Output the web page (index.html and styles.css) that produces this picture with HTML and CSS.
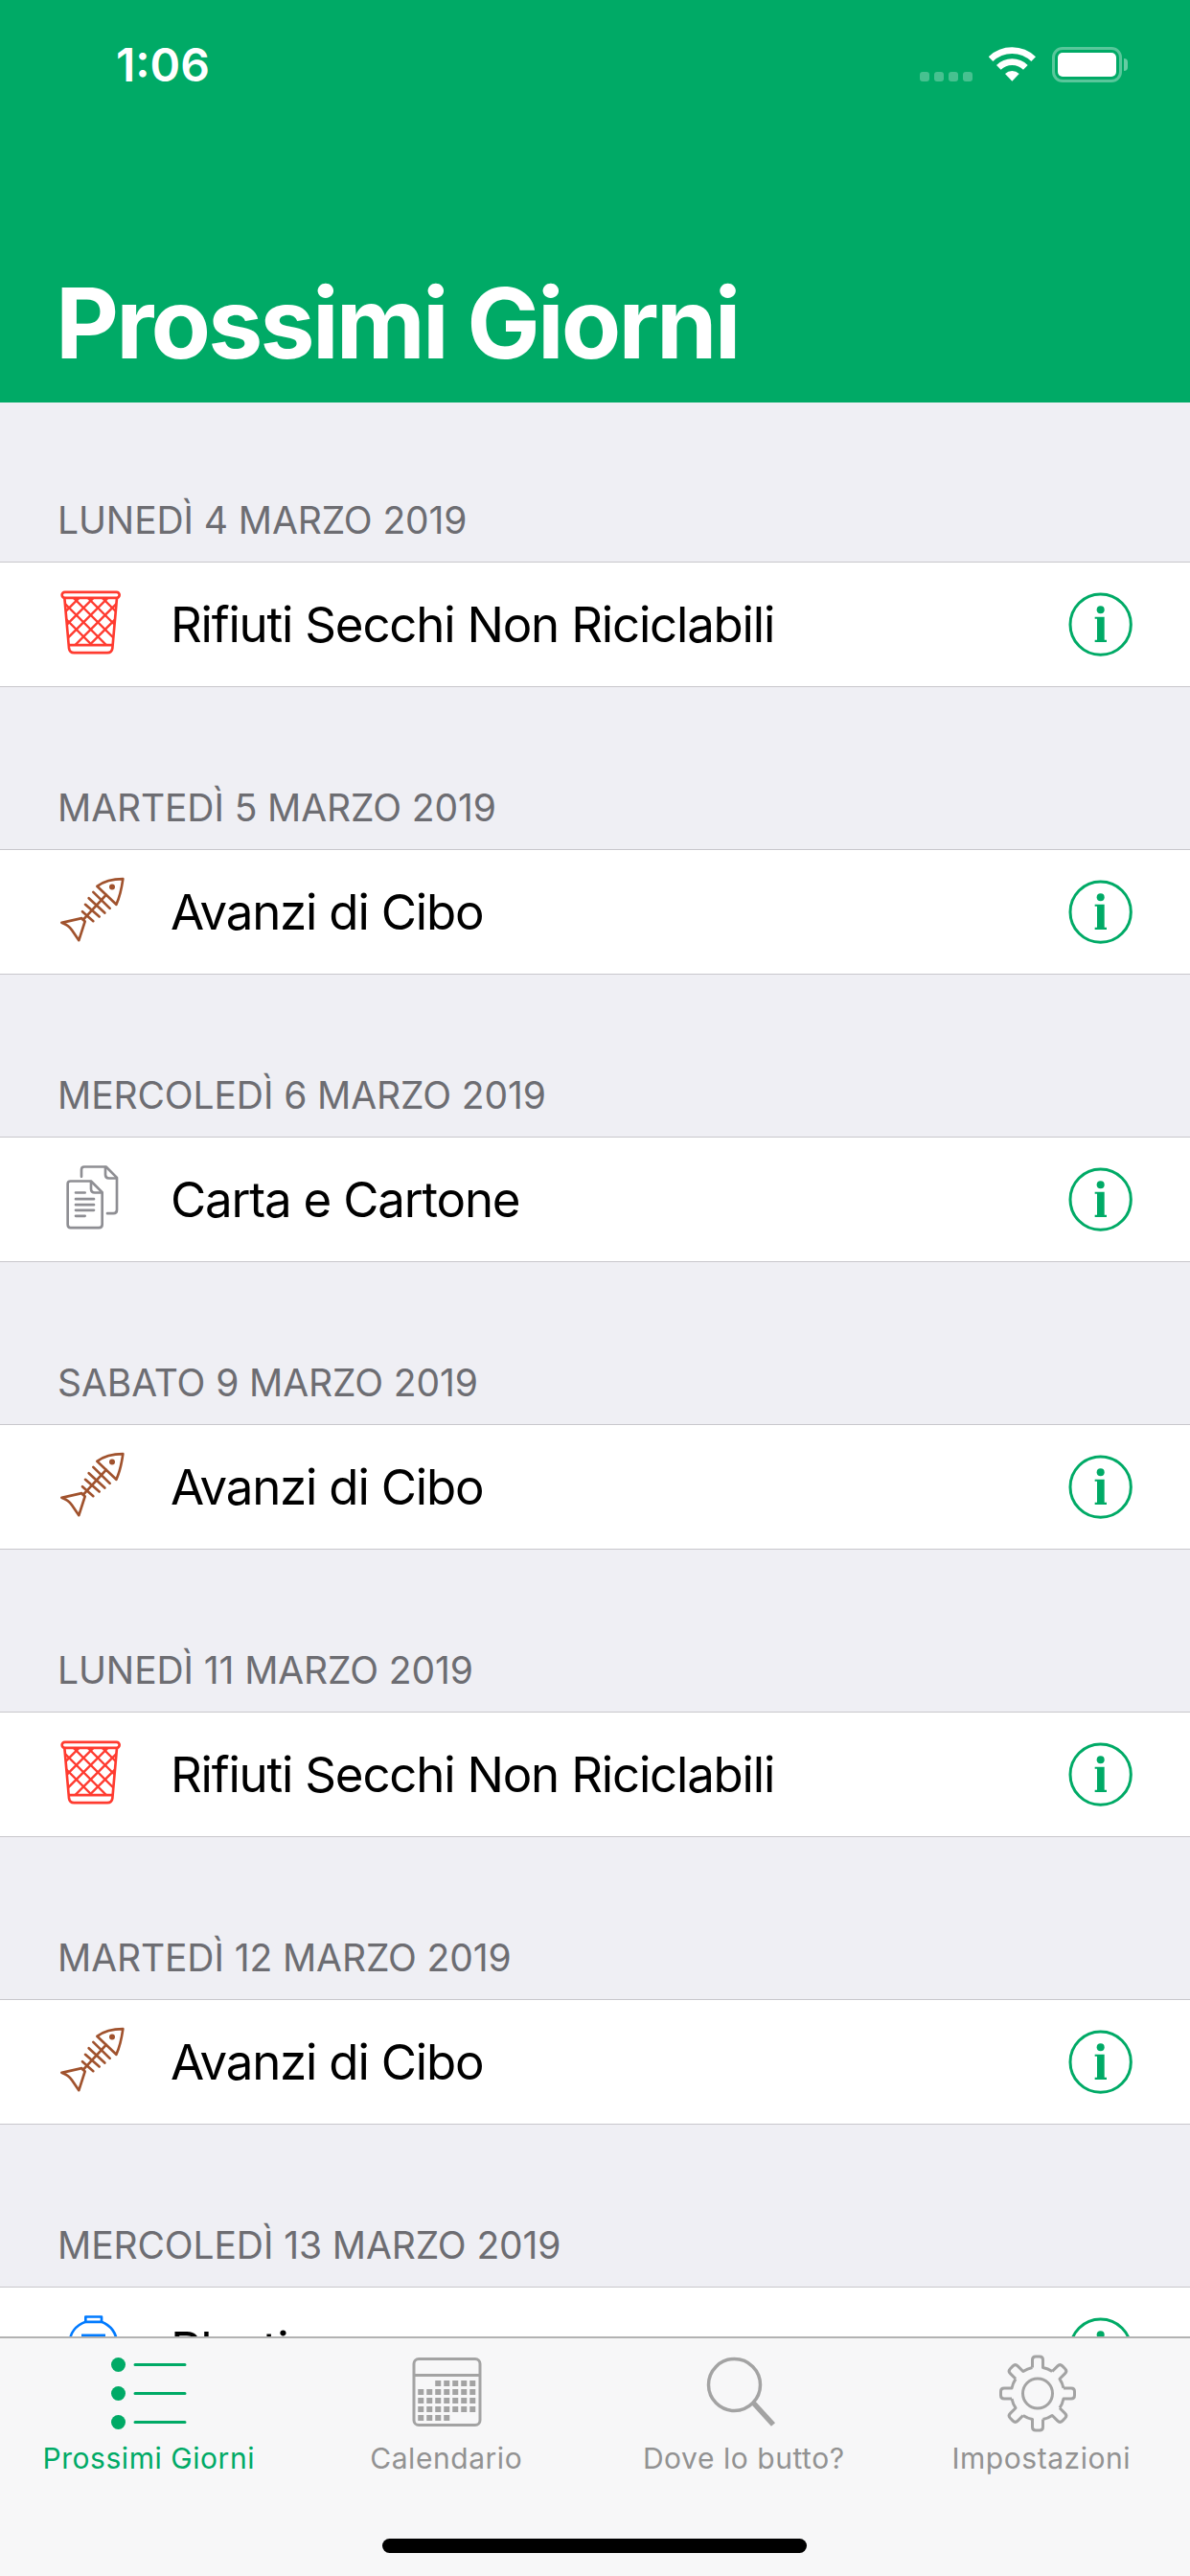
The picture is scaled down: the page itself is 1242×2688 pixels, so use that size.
FILE: index.html
```html
<!DOCTYPE html>
<html lang="it">
<head>
<meta charset="utf-8">
<title>Prossimi Giorni</title>
<link rel="stylesheet" href="styles.css">
</head>
<body>
<svg class="defs" width="0" height="0" aria-hidden="true">
  <defs>
    <clipPath id="trash-clip"><path d="M84 100H244L232 250H96Z"/></clipPath>
    <symbol id="trash" viewBox="30 49.5 270 270">
      <g fill="none" stroke="#ff3b30" stroke-width="8" stroke-linejoin="round">
        <rect x="74" y="82" width="180" height="18" rx="9"/>
        <path d="M82 100L96 258Q98 272 112 272H216Q230 272 232 258L246 100"/>
        <path d="M94 248H234"/>
        <g clip-path="url(#trash-clip)" stroke-width="7">
          <path d="M50 130L180 260M50 85L225 260M90 80L265 255M135 80L265 210M180 80L265 165M225 80L265 120"/>
          <path d="M278 130L148 260M278 85L103 260M238 80L63 255M193 80L63 210M148 80L63 165M103 80L63 120"/>
        </g>
      </g>
    </symbol>
    <symbol id="fish" viewBox="30 49.5 270 270">
      <g fill="none" stroke="#a0522d" stroke-width="8" stroke-linecap="round" stroke-linejoin="round">
        <path d="M265 80Q258 130 244 160L184 103Q215 80 265 80Z"/>
        <path d="M212 130L140 208"/>
        <path d="M172 121L224 172M158 140L208 186M147 160L191 198M138 182L172 212"/>
        <path d="M136 203L73 217Q95 225 105 240L127 272L146 213Z"/>
      </g>
      <circle cx="231" cy="105" r="9" fill="#a0522d"/>
    </symbol>
    <symbol id="paper" viewBox="30 49.5 270 270">
      <g fill="none" stroke="#8e8e93" stroke-width="8" stroke-linecap="round" stroke-linejoin="round">
        <path d="M135 112V90Q135 81 144 81H212L246 115V216Q246 227 235 227H216"/>
        <path d="M210 83V106Q210 117 221 117H244"/>
        <path d="M92 134Q92 126 101 126H165L200 161V262Q200 272 190 272H101Q92 272 92 262Z"/>
        <path d="M165 128V150Q165 162 177 162H198"/>
        <path d="M117 162H146M117 182H174M117 200H174M117 217H174M117 235H146"/>
      </g>
    </symbol>
    <symbol id="bottle" viewBox="30 49.5 270 270">
      <g fill="none" stroke="#007aff" stroke-width="8" stroke-linejoin="round">
        <path d="M148 81H198V97H148Z"/>
        <path d="M148 97C118 108 98 132 98 165V272Q98 290 116 290H228Q246 290 246 272V165C246 132 226 108 198 97"/>
        <path d="M135 140H210" stroke-width="10"/>
      </g>
    </symbol>
    <symbol id="info" viewBox="72 51 210 210">
      <circle cx="176" cy="155" r="95" fill="none" stroke="#00aa66" stroke-width="9"/>
      <circle cx="176" cy="109" r="12" fill="#00aa66"/>
      <path d="M158 131H188V203H195V210H158V203H165V137H158Z" fill="#00aa66"/>
    </symbol>
  </defs>
</svg>

<header class="nav">
  <div class="status">
    <span class="time">1:06</span>
    <div class="status-icons">
      <div class="signal"><i></i><i></i><i></i><i></i></div>
      <svg class="wifi" viewBox="277 58 147 108" width="49" height="36">
        <g fill="none" stroke="#fff" stroke-width="20">
          <path d="M283 96A96 96 0 0 1 417 96"/>
          <path d="M308 122A60 60 0 0 1 392 122"/>
        </g>
        <path d="M350 165L328 142A32 32 0 0 1 372 142Z" fill="#fff"/>
      </svg>
      <div class="battery"><div class="battery-level"></div></div>
      <div class="battery-nub"></div>
    </div>
  </div>
  <h1 class="title">Prossimi Giorni</h1>
</header>

<main class="list">
  <section class="section">
    <h2 class="date">LUNEDÌ 4 MARZO 2019</h2>
    <div class="row">
      <svg class="row-icon"><use href="#trash"/></svg>
      <span class="row-text">Rifiuti Secchi Non Riciclabili</span>
      <svg class="row-info"><use href="#info"/></svg>
    </div>
  </section>
  <section class="section">
    <h2 class="date">MARTEDÌ 5 MARZO 2019</h2>
    <div class="row">
      <svg class="row-icon"><use href="#fish"/></svg>
      <span class="row-text">Avanzi di Cibo</span>
      <svg class="row-info"><use href="#info"/></svg>
    </div>
  </section>
  <section class="section">
    <h2 class="date">MERCOLEDÌ 6 MARZO 2019</h2>
    <div class="row">
      <svg class="row-icon"><use href="#paper"/></svg>
      <span class="row-text">Carta e Cartone</span>
      <svg class="row-info"><use href="#info"/></svg>
    </div>
  </section>
  <section class="section">
    <h2 class="date">SABATO 9 MARZO 2019</h2>
    <div class="row">
      <svg class="row-icon"><use href="#fish"/></svg>
      <span class="row-text">Avanzi di Cibo</span>
      <svg class="row-info"><use href="#info"/></svg>
    </div>
  </section>
  <section class="section">
    <h2 class="date">LUNEDÌ 11 MARZO 2019</h2>
    <div class="row">
      <svg class="row-icon"><use href="#trash"/></svg>
      <span class="row-text">Rifiuti Secchi Non Riciclabili</span>
      <svg class="row-info"><use href="#info"/></svg>
    </div>
  </section>
  <section class="section">
    <h2 class="date">MARTEDÌ 12 MARZO 2019</h2>
    <div class="row">
      <svg class="row-icon"><use href="#fish"/></svg>
      <span class="row-text">Avanzi di Cibo</span>
      <svg class="row-info"><use href="#info"/></svg>
    </div>
  </section>
  <section class="section">
    <h2 class="date">MERCOLEDÌ 13 MARZO 2019</h2>
    <div class="row">
      <svg class="row-icon"><use href="#bottle"/></svg>
      <span class="row-text">Plastica</span>
      <svg class="row-info"><use href="#info"/></svg>
    </div>
  </section>
</main>

<nav class="tabbar">
  <div class="tab tab-active">
    <svg class="tab-icon" viewBox="0 0 120 90">
      <g fill="#00aa66">
        <circle cx="28.5" cy="15.5" r="7.5"/>
        <circle cx="28.5" cy="45.5" r="7.5"/>
        <circle cx="28.5" cy="75.5" r="7.5"/>
      </g>
      <path d="M46 15.5H98M46 45.5H98M46 75.5H98" stroke="#00aa66" stroke-width="3" stroke-linecap="round"/>
    </svg>
    <span class="tab-label">Prossimi Giorni</span>
  </div>
  <div class="tab">
    <svg class="tab-icon" viewBox="0 0 120 90">
      <rect x="26" y="9.5" width="69" height="69" rx="5" fill="none" stroke="#a3a3a3" stroke-width="3"/>
      <path d="M26 26.5H95" stroke="#a3a3a3" stroke-width="3"/>
      <g fill="#a3a3a3">
        <rect x="48.25" y="32" width="6" height="6"/><rect x="57.25" y="32" width="6" height="6"/><rect x="66.25" y="32" width="6" height="6"/><rect x="75.25" y="32" width="6" height="6"/><rect x="84.25" y="32" width="6" height="6"/>
        <rect x="30.25" y="41" width="6" height="6"/><rect x="39.25" y="41" width="6" height="6"/><rect x="48.25" y="41" width="6" height="6"/><rect x="57.25" y="41" width="6" height="6"/><rect x="66.25" y="41" width="6" height="6"/><rect x="75.25" y="41" width="6" height="6"/><rect x="84.25" y="41" width="6" height="6"/>
        <rect x="30.25" y="50" width="6" height="6"/><rect x="39.25" y="50" width="6" height="6"/><rect x="48.25" y="50" width="6" height="6"/><rect x="57.25" y="50" width="6" height="6"/><rect x="66.25" y="50" width="6" height="6"/><rect x="75.25" y="50" width="6" height="6"/><rect x="84.25" y="50" width="6" height="6"/>
        <rect x="30.25" y="59" width="6" height="6"/><rect x="39.25" y="59" width="6" height="6"/><rect x="48.25" y="59" width="6" height="6"/><rect x="57.25" y="59" width="6" height="6"/><rect x="66.25" y="59" width="6" height="6"/><rect x="75.25" y="59" width="6" height="6"/><rect x="84.25" y="59" width="6" height="6"/>
        <rect x="30.25" y="68" width="6" height="6"/><rect x="39.25" y="68" width="6" height="6"/><rect x="48.25" y="68" width="6" height="6"/><rect x="57.25" y="68" width="6" height="6"/>
      </g>
    </svg>
    <span class="tab-label">Calendario</span>
  </div>
  <div class="tab">
    <svg class="tab-icon" viewBox="0 0 120 90">
      <circle cx="50.5" cy="36.5" r="27" fill="none" stroke="#a3a3a3" stroke-width="3.5"/>
      <path d="M70 55L91 78" stroke="#a3a3a3" stroke-width="5.5"/>
    </svg>
    <span class="tab-label">Dove lo butto?</span>
  </div>
  <div class="tab">
    <svg class="tab-icon" viewBox="0 0 120 90">
      <g transform="translate(56 45.5)" fill="none" stroke="#a3a3a3" stroke-width="3" stroke-linejoin="round">
        <circle r="15.5"/>
        <path d="M-5.5 -27V-35Q-5.5 -38.5 -2 -38.5H2Q5.5 -38.5 5.5 -35V-27A27.5 27.5 0 0 1 15.2 -23"/>
        <path transform="rotate(45)" d="M-5.5 -27V-35Q-5.5 -38.5 -2 -38.5H2Q5.5 -38.5 5.5 -35V-27A27.5 27.5 0 0 1 15.2 -23"/>
        <path transform="rotate(90)" d="M-5.5 -27V-35Q-5.5 -38.5 -2 -38.5H2Q5.5 -38.5 5.5 -35V-27A27.5 27.5 0 0 1 15.2 -23"/>
        <path transform="rotate(135)" d="M-5.5 -27V-35Q-5.5 -38.5 -2 -38.5H2Q5.5 -38.5 5.5 -35V-27A27.5 27.5 0 0 1 15.2 -23"/>
        <path transform="rotate(180)" d="M-5.5 -27V-35Q-5.5 -38.5 -2 -38.5H2Q5.5 -38.5 5.5 -35V-27A27.5 27.5 0 0 1 15.2 -23"/>
        <path transform="rotate(225)" d="M-5.5 -27V-35Q-5.5 -38.5 -2 -38.5H2Q5.5 -38.5 5.5 -35V-27A27.5 27.5 0 0 1 15.2 -23"/>
        <path transform="rotate(270)" d="M-5.5 -27V-35Q-5.5 -38.5 -2 -38.5H2Q5.5 -38.5 5.5 -35V-27A27.5 27.5 0 0 1 15.2 -23"/>
        <path transform="rotate(315)" d="M-5.5 -27V-35Q-5.5 -38.5 -2 -38.5H2Q5.5 -38.5 5.5 -35V-27A27.5 27.5 0 0 1 15.2 -23"/>
      </g>
    </svg>
    <span class="tab-label">Impostazioni</span>
  </div>
  <div class="home-indicator"></div>
</nav>
</body>
</html>
```

FILE: styles.css
```css
* {
  box-sizing: border-box;
}

html,
body {
  margin: 0;
  padding: 0;
}

body {
  position: relative;
  width: 1242px;
  height: 2688px;
  overflow: hidden;
  background: #efeff4;
  font-family: Inter, "Liberation Sans", sans-serif;
  color: #000;
}

.defs {
  position: absolute;
}

.nav {
  height: 420px;
  background: #00aa66;
  color: #fff;
  display: flex;
  flex-direction: column;
  justify-content: space-between;
  padding: 40px 0 23px 0;
}

.status {
  display: flex;
  justify-content: space-between;
  align-items: flex-start;
  padding: 0 65px 0 121px;
}

.time {
  font-size: 48px;
  font-weight: 600;
  line-height: 56px;
}

.status-icons {
  display: flex;
  align-items: flex-start;
  padding-top: 9px;
}

.signal {
  display: flex;
  gap: 5px;
  margin-top: 26px;
  margin-right: 17px;
}

.signal i {
  display: block;
  width: 10px;
  height: 10px;
  border-radius: 3px;
  background: rgba(255, 255, 255, 0.28);
}

.wifi {
  margin-right: 17px;
}

.battery {
  width: 73px;
  height: 37px;
  padding: 3px;
  border: 3px solid rgba(255, 255, 255, 0.35);
  border-radius: 11px;
}

.battery-level {
  width: 61px;
  height: 25px;
  background: #fff;
  border-radius: 5px;
}

.battery-nub {
  width: 4px;
  height: 13px;
  margin: 12px 0 0 2px;
  background: rgba(255, 255, 255, 0.4);
  border-radius: 0 4px 4px 0;
}

.title {
  margin: 0;
  padding-left: 58px;
  font-size: 102px;
  font-weight: 700;
  line-height: 120px;
  letter-spacing: -2.8px;
}

.section {
  padding-bottom: 3px;
}

.date {
  margin: 0;
  height: 166px;
  padding: 0 0 19px 60px;
  display: flex;
  align-items: flex-end;
  font-size: 39px;
  font-weight: 400;
  line-height: 48px;
  letter-spacing: -0.1px;
  color: #6d6d72;
}

.row {
  height: 131px;
  display: flex;
  align-items: center;
  background: #fff;
  border-top: 1.5px solid #c8c7cc;
  border-bottom: 1.5px solid #c8c7cc;
  padding: 0 58px 0 50px;
}

.row-icon {
  flex: none;
  width: 90px;
  height: 90px;
}

.row-text {
  flex: 1;
  margin-left: 38px;
  font-size: 51px;
  line-height: 62px;
  letter-spacing: -1.2px;
}

.row-info {
  flex: none;
  width: 70px;
  height: 70px;
}

.tabbar {
  position: absolute;
  left: 0;
  right: 0;
  bottom: 0;
  height: 250px;
  display: flex;
  padding-top: 12px;
  border-top: 2px solid #b2b2b2;
  background: #f7f7f8;
}

.tab {
  flex: 1;
  display: flex;
  flex-direction: column;
  align-items: center;
  gap: 5px;
  color: #929292;
}

.tab-active {
  color: #00aa66;
}

.tab-icon {
  display: block;
  width: 120px;
  height: 90px;
}

.tab-label {
  font-size: 30px;
  line-height: 36px;
  font-weight: 400;
  letter-spacing: 0.55px;
}

.home-indicator {
  position: absolute;
  left: 399px;
  bottom: 24px;
  width: 443px;
  height: 15px;
  background: #000;
  border-radius: 8px;
}
```
